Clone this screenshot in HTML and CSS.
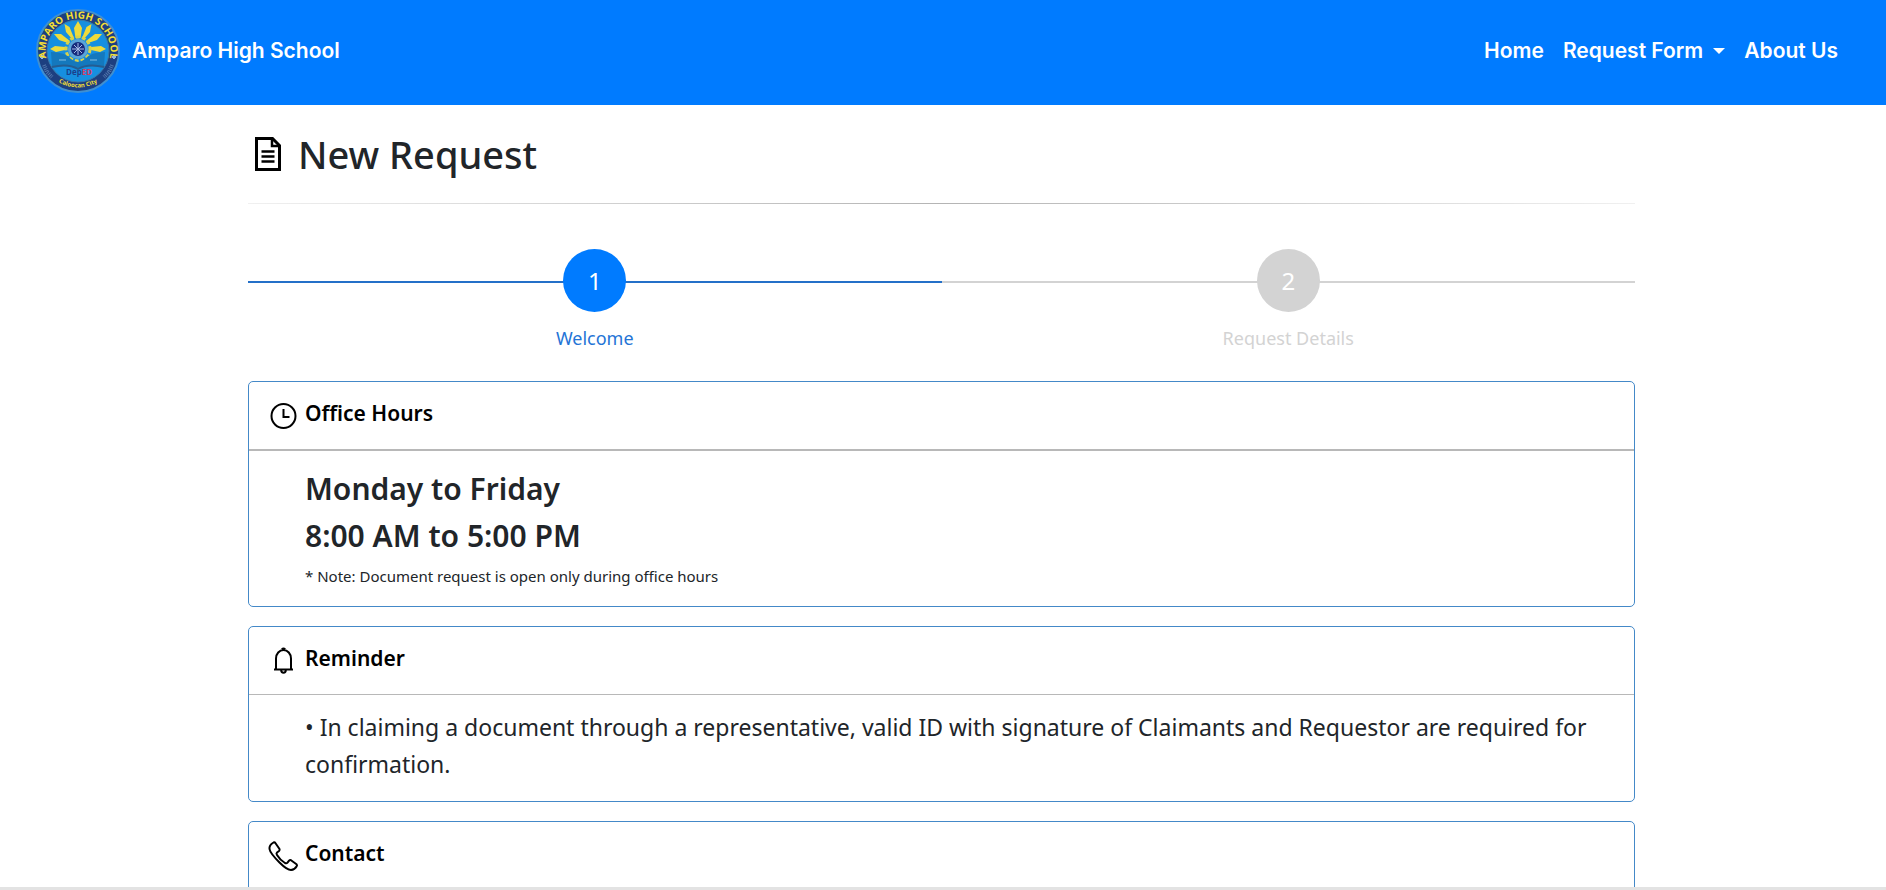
FILE: index.html
```html
<!DOCTYPE html>
<html lang="en">
<head>
<meta charset="utf-8">
<meta name="viewport" content="width=device-width, initial-scale=1">
<title>New Request - Amparo High School</title>
<link rel="stylesheet" href="styles.css">
</head>
<body>
<header class="navbar">
  <a class="brand" href="#">
    <svg class="logo" viewBox="0 0 86 86" aria-hidden="true">
      <defs>
        <path id="arc-top" d="M11.500 51 A32.500 32.500 0 1 1 74.500 51"/>
        <path id="arc-bottom" d="M18 71 Q43 88 68 71"/>
      </defs>
      <circle cx="43" cy="43" r="41" fill="#1d3f80" stroke="#3f8fd0" stroke-width="2"/>
      <circle cx="43" cy="43" r="31" fill="#168fe0" stroke="#3b79a6" stroke-width="1"/>
      <g fill="#eedb3c">
        <path d="M40.500 30l-1.500-10 4-7 4 7-1.500 10z"/>
        <path d="M37 31l-6-7-1.500-8 5 3 4.500 11z"/>
        <path d="M49 31l6-7 1.500-8-5 3-4.500 11z"/>
        <path d="M33 35l-9-3-5-6 7 0 9 7z"/>
        <path d="M53 35l9-3 5-6-7 0-9 7z"/>
        <path d="M30 42l-9 2-6-3 5-3 10 1z"/>
        <path d="M56 42l9 2 6-3-5-3-10 1z"/>
      </g>
      <circle cx="43" cy="41" r="12" fill="none" stroke="#d8d24a" stroke-width="3" stroke-dasharray="4 2"/>
      <circle cx="43" cy="41" r="10" fill="#5aa4d8"/>
      <circle cx="43" cy="41" r="7" fill="#162a7c"/>
      <path d="M43 35v12M37 41h12M39 37l8 8M47 37l-8 8" stroke="#a8bce8" stroke-width="1"/>
      <path d="M16 44q14 0 20 7 7 6 14 0 6-7 20-7l-1 15q-16-4-26 2-10-6-26-2z" fill="#1478bd"/>
      <path d="M17 59q16-4 26 2 10-6 26-2" fill="none" stroke="#255d91" stroke-width="2"/>
      <path d="M24 52h7M55 52h7" stroke="#4c9bd0" stroke-width="2"/>
      <path d="M9 57l3 7 5 5M77 57l-3 7-5 5" fill="none" stroke="#5275aa" stroke-width="4" stroke-dasharray="1 1"/>
      <path d="M7 47v4M5 49h4M79 47v4M77 49h4" stroke="#8fb5df" stroke-width="2"/>
      <text class="seal-dep" x="31" y="67">Dep<tspan class="seal-ed">ED</tspan></text>
      <text class="seal-name"><textPath href="#arc-top" startOffset="50%">AMPARO HIGH SCHOOL</textPath></text>
      <text class="seal-city"><textPath href="#arc-bottom" startOffset="50%">Caloocan City</textPath></text>
    </svg>
    <span>Amparo High School</span>
  </a>
  <nav class="menu" aria-label="Main">
    <a href="#">Home</a>
    <button type="button" class="dropdown" aria-haspopup="true">Request Form</button>
    <a href="#">About Us</a>
  </nav>
</header>

<main class="page">
  <h1 class="title">
    <svg class="title-icon" viewBox="0 0 26 34" aria-hidden="true">
      <path d="M1.500 1.500h16l7 7v24h-23z" fill="none" stroke="#000" stroke-width="3"/>
      <path d="M17 1v8h8" fill="none" stroke="#000" stroke-width="2.500"/>
      <path d="M6.500 14.500h13M6.500 19.500h13M6.500 24.500h13" stroke="#000" stroke-width="2.400"/>
    </svg>
    New Request
  </h1>
  <hr class="rule">

  <ol class="steps">
    <li class="step step-active"><span class="step-number">1</span><span class="step-label">Welcome</span></li>
    <li class="step"><span class="step-number">2</span><span class="step-label">Request Details</span></li>
  </ol>

  <section class="card">
    <h2 class="card-header card-header-thick">
      <svg class="card-icon" viewBox="0 0 32 32" fill="none" stroke="#000" stroke-width="2" aria-hidden="true">
        <circle cx="16.500" cy="16" r="12"/>
        <path d="M16.500 9v8h6"/>
      </svg>
      Office Hours
    </h2>
    <div class="card-body">
      <p class="hours">Monday to Friday</p>
      <p class="hours">8:00 AM to 5:00 PM</p>
      <p class="note">* Note: Document request is open only during office hours</p>
    </div>
  </section>

  <section class="card">
    <h2 class="card-header">
      <svg class="card-icon" viewBox="0 0 32 32" fill="none" stroke="#000" stroke-width="2" aria-hidden="true">
        <path d="M7 24.500h19"/>
        <path d="M9 24V13.500a7.500 8.500 0 0 1 15 0V24"/>
        <path d="M15 4.500q1.500-1.500 3 0" stroke-width="2.500"/>
        <path d="M14.200 25a2.300 2.800 0 0 0 4.600 0"/>
      </svg>
      Reminder
    </h2>
    <div class="card-body">
      <p class="reminder">• In claiming a document through a representative, valid ID with signature of Claimants and Requestor are required for confirmation.</p>
    </div>
  </section>

  <section class="card">
    <h2 class="card-header">
      <svg class="card-icon" viewBox="0 0 32 32" fill="none" stroke="#000" stroke-width="2" stroke-linejoin="round" aria-hidden="true">
        <path d="M8 2.500L12.500 9q.500 1-.500 2l-2 1.500q-1 1 0 2.500 3 5 8 8 1.500.800 2.500-.300l1.500-2q1-1 2-.500l5.500 4q1 1 .200 2-2 3.500-5.700 3.800-4 0-11.500-7.500-9.500-9.500-10-13.500Q2 5 6.500 2.500q1-.500 1.500 0z"/>
      </svg>
      Contact
    </h2>
    <div class="card-body"></div>
  </section>
</main>
<div class="page-end"></div>
</body>
</html>
```
FILE: styles.css
```css
* {
  box-sizing: border-box;
}

body {
  display: flex;
  flex-direction: column;
  height: 100vh;
  margin: 0;
  overflow: hidden;
  background: #fff;
  color: #212529;
  font-family: "Noto Sans", "Open Sans", sans-serif;
}

.navbar {
  display: flex;
  flex: none;
  align-items: center;
  justify-content: space-between;
  padding: 8px 48px 11px 35px;
  background: #007bff;
  font: 600 21px/30px Inter, sans-serif;
}

.brand {
  display: flex;
  align-items: center;
  gap: 11px;
  color: #fff;
  text-decoration: none;
}

.logo {
  display: block;
  width: 86px;
  height: 86px;
  overflow: visible;
}

.seal-name,
.seal-city {
  fill: #f5df35;
  font-family: "Open Sans", sans-serif;
  font-weight: 700;
  text-anchor: middle;
}

.seal-name {
  font-size: 10px;
}

.seal-city {
  font-size: 6px;
}

.seal-dep {
  fill: #1b3f8c;
  font: 700 8px "Open Sans", sans-serif;
}

.seal-ed {
  fill: #d43a62;
}

.menu {
  display: flex;
  align-items: center;
  gap: 19px;
}

.menu a,
.dropdown {
  padding: 0;
  border: 0;
  background: none;
  color: #fff;
  font: inherit;
  text-decoration: none;
}

.dropdown {
  display: flex;
  align-items: center;
  gap: 10px;
}

.dropdown::after {
  content: "";
  border: 6px solid transparent;
  border-top-color: #fff;
  border-bottom: 0;
}

.page {
  flex: 1;
  min-height: 0;
  margin: 0 251px 0 248px;
  overflow: hidden;
}

.title {
  display: flex;
  align-items: center;
  gap: 17px;
  margin: 25px 0 0;
  padding-left: 7px;
  font-size: 38px;
  font-weight: 500;
  line-height: 48px;
}

.title-icon {
  width: 26px;
  height: 34px;
}

.rule {
  height: 1px;
  margin: 25px 0 45px;
  border: 0;
  background: linear-gradient(to right, #f0f0f0, #b4b4b4 50%, #f0f0f0);
}

.steps {
  display: grid;
  grid-template-columns: 1fr 1fr;
  margin: 0 0 30px;
  padding: 0;
  list-style: none;
}

.step {
  position: relative;
  display: flex;
  flex-direction: column;
  align-items: center;
  gap: 13px;
  color: #d3d3d3;
}

.step::before {
  content: "";
  position: absolute;
  top: 32px;
  left: 0;
  width: 100%;
  height: 2px;
  background: #d3d3d3;
}

.step-number {
  position: relative;
  display: grid;
  place-items: center;
  width: 63px;
  height: 63px;
  border-radius: 50%;
  background: #d3d3d3;
  color: #fff;
  font-size: 24px;
}

.step-label {
  font-size: 18px;
  line-height: 26px;
}

.step-active {
  color: #2474d6;
}

.step-active::before {
  background: #2470c8;
}

.step-active .step-number {
  background: #007bff;
}

.card {
  margin-bottom: 19px;
  border: 1px solid #4489c8;
  border-radius: 5px;
}

.card-header {
  display: flex;
  align-items: flex-start;
  gap: 6px;
  margin: 0;
  padding: 18px 18px 17px;
  border-bottom: 1px solid #b8b8b8;
  color: #000;
  font-size: 21px;
  font-weight: 600;
  line-height: 26px;
}

.card-header-thick {
  border-bottom-width: 2px;
}

.card-icon {
  width: 32px;
  height: 32px;
}

.card-body {
  padding: 14px 24px 18px 56px;
}

.hours {
  margin: 0;
  font-size: 30px;
  font-weight: 600;
  line-height: 47px;
}

.note {
  margin: 5px 0 0;
  font-size: 15px;
  line-height: 24px;
}

.reminder {
  margin: 0;
  font-size: 23px;
  line-height: 37px;
}

.page-end {
  flex: none;
  height: 3px;
  background: #e3e3e3;
}
```
